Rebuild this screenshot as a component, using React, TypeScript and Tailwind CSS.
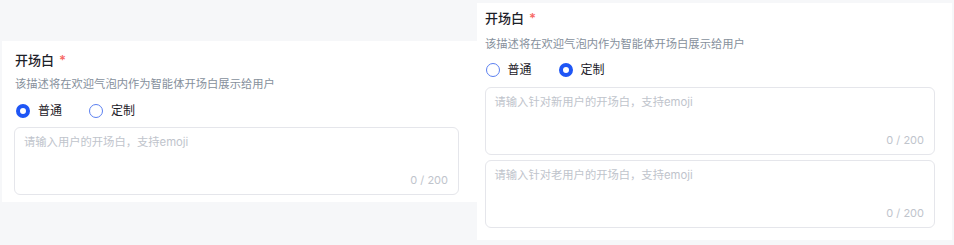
import React from "react";

const font = { fontFamily: '"Inter", "Noto Sans CJK SC", sans-serif' };

function Radio({ checked, label }: { checked: boolean; label: string }) {
  return (
    <div className="flex items-center gap-[8px]">
      {checked ? (
        <span className="box-border h-[14px] w-[14px] rounded-full border-[4.5px] border-[#1f56f5] bg-white" />
      ) : (
        <span className="box-border h-[14px] w-[14px] rounded-full border border-[#5b7ff0] bg-white" />
      )}
      <span className="text-[12px] leading-none text-[#1d2129]">{label}</span>
    </div>
  );
}

function Box({ placeholder }: { placeholder: string }) {
  return (
    <div className="box-border flex h-[68px] flex-col justify-between rounded-[6px] border border-[#e5e6eb] bg-white px-[9px] pb-[7px] pt-[6px]">
      <div className="text-[11.3px] leading-[16px] text-[#c0c4cc]">{placeholder}</div>
      <div className="self-end pr-[1px] text-[11px] leading-[14px] text-[#c0c4cc]">0 / 200</div>
    </div>
  );
}

function Header() {
  return (
    <div className="flex items-center text-[13px] font-medium leading-[18px] text-[#1d2129]">
      开场白<span className="ml-[5px] text-[13px] font-semibold text-[#f76965]">*</span>
    </div>
  );
}

export default function App() {
  return (
    <div className="flex h-[245px] w-[954px] items-start bg-[#f6f7f9]" style={font}>
      <div className="ml-[2px] mt-[41px] box-border h-[161px] w-[475px] bg-white pl-[12px] pr-[18px] pt-[10px]">
        <div className="pl-[1px]">
          <Header />
          <div className="mt-[7px] text-[11.3px] leading-[16px] text-[#86909c]">
            该描述将在欢迎气泡内作为智能体开场白展示给用户
          </div>
        </div>
        <div className="mt-[12px] flex h-[14px] items-center gap-[27px] pl-[2px]">
          <Radio checked label="普通" />
          <Radio checked={false} label="定制" />
        </div>
        <div className="mt-[9px]">
          <Box placeholder="请输入用户的开场白，支持emoji" />
        </div>
      </div>
      <div className="mt-[3px] box-border h-[237px] w-[475px] bg-white pl-[7.5px] pr-[17px] pt-[6px]">
        <div className="pl-[0.5px]">
          <Header />
          <div className="mt-[9px] text-[11.3px] leading-[16px] text-[#86909c]">
            该描述将在欢迎气泡内作为智能体开场白展示给用户
          </div>
        </div>
        <div className="mt-[11px] flex h-[14px] items-center gap-[27px] pl-[1px]">
          <Radio checked={false} label="普通" />
          <Radio checked label="定制" />
        </div>
        <div className="mt-[10px] flex flex-col gap-[5px]">
          <Box placeholder="请输入针对新用户的开场白，支持emoji" />
          <Box placeholder="请输入针对老用户的开场白，支持emoji" />
        </div>
      </div>
    </div>
  );
}
